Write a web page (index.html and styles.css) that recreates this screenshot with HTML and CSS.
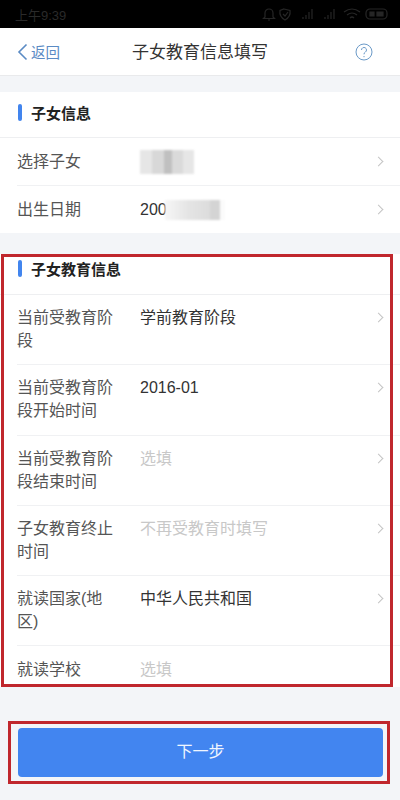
FILE: index.html
```html
<!DOCTYPE html>
<html>
<head>
    <title>子女教育信息填写</title>
    <link rel="stylesheet" href="styles.css">
</head>
<body>
    <div class="phone">
        <div class="status-bar">
            <span class="status-time">上午9:39</span>
            <svg class="status-icons" width="130" height="14" viewBox="0 0 130 14" fill="none" stroke="#262626" stroke-width="1.2">
                <path d="M6 10V6a4 4 0 0 1 8 0v4l1.500 1.500H4.500zM9 13h2"/>
                <path d="M25 2l6 1.500q1 6-5 9.500q-6-3.500-5-9.500zM24 7l2 2 3-4"/>
                <path d="M44 12v-2M47 12V8M50 12V5M53 12V2M66 12v-2M69 12V8M72 12V5M75 12V2"/>
                <path d="M85 5q8-6 16 0M88 8q5-4 10 0M91 11q2-2 4 0"/>
                <rect x="107" y="2" width="21" height="10" rx="4"/>
                <path d="M111 5h4v4h-4zM118 5h6v4h-6z" fill="#262626"/>
            </svg>
        </div>

        <div class="nav-bar">
            <a class="nav-back">
                <svg width="11" height="18" viewBox="0 0 11 18" fill="none" stroke="#5b8bc4" stroke-width="1.600">
                    <path d="M9.500 1.500L2 9l7.500 7.500"/>
                </svg>
                <span>返回</span>
            </a>
            <div class="nav-title">子女教育信息填写</div>
            <svg class="nav-help" width="18" height="18" viewBox="0 0 18 18" fill="none" stroke="#6b9ac8" stroke-width="1">
                <circle cx="9" cy="9" r="8"/>
                <path d="M6.500 7a2.500 2.500 0 1 1 3.800 2.100c-.9.600-1.300 1-1.300 2.200M9 13v1.200"/>
            </svg>
        </div>

        <div class="content">
            <section class="card card-child">
                <div class="card-title">子女信息</div>
                <div class="row">
                    <div class="row-label">选择子女</div>
                    <div class="row-value"><span class="mosaic mosaic-name"></span></div>
                    <span class="chevron"></span>
                </div>
                <div class="row row-end">
                    <div class="row-label">出生日期</div>
                    <div class="row-value">200<span class="mosaic mosaic-date"></span></div>
                    <span class="chevron"></span>
                </div>
            </section>

            <section class="card card-education">
                <div class="card-title">子女教育信息</div>
                <div class="row row-tall">
                    <div class="row-label">当前受教育阶段</div>
                    <div class="row-value">学前教育阶段</div>
                    <span class="chevron"></span>
                </div>
                <div class="row row-tall">
                    <div class="row-label">当前受教育阶段开始时间</div>
                    <div class="row-value">2016-01</div>
                    <span class="chevron"></span>
                </div>
                <div class="row row-tall">
                    <div class="row-label">当前受教育阶段结束时间</div>
                    <div class="row-value placeholder">选填</div>
                    <span class="chevron"></span>
                </div>
                <div class="row row-tall">
                    <div class="row-label">子女教育终止时间</div>
                    <div class="row-value placeholder">不再受教育时填写</div>
                    <span class="chevron"></span>
                </div>
                <div class="row row-tall">
                    <div class="row-label">就读国家(地区)</div>
                    <div class="row-value">中华人民共和国</div>
                    <span class="chevron"></span>
                </div>
                <div class="row row-cut">
                    <div class="row-label">就读学校</div>
                    <div class="row-value placeholder">选填</div>
                </div>
                <div class="red-box"></div>
            </section>

            <div class="footer">
                <button class="next-btn" type="button">下一步</button>
                <div class="red-box red-box-btn"></div>
            </div>
        </div>
    </div>
</body>
</html>
```
FILE: styles.css
```css
* {
    box-sizing: border-box;
}

body {
    margin: 0;
    font-family: "Liberation Sans", "Noto Sans CJK SC", sans-serif;
    background-color: #f3f5f8;
}

.phone {
    width: 400px;
    height: 800px;
    overflow: hidden;
    display: flex;
    flex-direction: column;
}

.status-bar {
    height: 28px;
    background-color: #000;
    display: flex;
    align-items: center;
    justify-content: space-between;
    padding: 0 11px 0 15px;
}

.status-time {
    color: #2a2a2a;
    font-size: 13px;
}

.nav-bar {
    height: 48px;
    background-color: #fff;
    border-bottom: 1px solid #e9eaec;
    display: flex;
    align-items: center;
    padding: 0 27px 0 17px;
}

.nav-back {
    width: 98px;
    display: flex;
    align-items: center;
    gap: 3px;
    color: #5b8bc4;
    font-size: 14.500px;
}

.nav-title {
    flex: 1;
    text-align: center;
    color: #333;
    font-size: 17px;
    padding-bottom: 3px;
}

.nav-help {
    margin-left: 70px;
}

.content {
    flex: 1;
    padding-top: 16px;
}

.card {
    background-color: #fff;
    position: relative;
}

.card-child {
    margin-bottom: 21px;
}

.card-title {
    height: 46px;
    display: flex;
    align-items: center;
    gap: 9px;
    padding: 0 0 4px 18px;
    color: #222;
    font-size: 15px;
    font-weight: bold;
    border-bottom: 1px solid #eeeff1;
}

.card-title::before {
    content: "";
    width: 4px;
    height: 17px;
    border-radius: 2px;
    background-color: #4285ee;
}

.card-education .card-title {
    height: 41px;
    padding-bottom: 11px;
}

.row {
    height: 48px;
    margin-left: 17px;
    padding-right: 16px;
    display: flex;
    align-items: center;
    border-bottom: 1px solid #f0f1f3;
    font-size: 16px;
}

.row-end {
    height: 47px;
    border-bottom: none;
}

.row-label {
    width: 123px;
    padding-right: 24px;
    color: #555;
    line-height: 23px;
}

.row-value {
    flex: 1;
    color: #333;
    display: flex;
    align-items: center;
}

.placeholder {
    color: #c8c8c8;
}

.chevron {
    width: 7px;
    height: 7px;
    margin-right: 2px;
    border-top: 1.500px solid #c4c4c4;
    border-right: 1.500px solid #c4c4c4;
    transform: rotate(45deg);
}

.row-tall {
    height: 70.300px;
    align-items: flex-start;
    padding-top: 11px;
}

.row-tall .row-value {
    line-height: 23px;
}

.row-tall .chevron {
    margin-top: 8px;
}

.row-cut {
    height: 41px;
    align-items: flex-start;
    padding-top: 12px;
    border-bottom: none;
}

.row-cut .row-value {
    line-height: 23px;
}

.mosaic {
    display: inline-block;
    filter: blur(1px);
}

.mosaic-name {
    width: 54px;
    height: 24px;
    background: linear-gradient(90deg, #e6e6e6 0 22%, #d8d8d8 22% 45%, #c0c0c0 45% 60%, #dadada 60% 80%, #e6e6e6 80%);
}

.mosaic-date {
    width: 60px;
    height: 20px;
    margin-left: -2px;
    background: linear-gradient(90deg, #f6f6f6 0, #e4e4e4 40%, #dcdcdc 75%, #d4d4d4 75% 92%, #fbfbfb 92%);
}

.red-box {
    position: absolute;
    left: 1px;
    right: 7px;
    top: 0;
    bottom: 0;
    border: 3px solid #c0272d;
    pointer-events: none;
}

.footer {
    position: relative;
    margin-top: 41px;
    padding: 0 17px 0 18px;
}

.next-btn {
    width: 365px;
    height: 49px;
    border: none;
    border-radius: 4px;
    padding: 0 0 6px;
    background-color: #4285f0;
    color: #f0f6ff;
    font-family: inherit;
    font-size: 16px;
}

.red-box-btn {
    left: 8px;
    right: 10px;
    top: -7px;
    bottom: -7px;
}
```
